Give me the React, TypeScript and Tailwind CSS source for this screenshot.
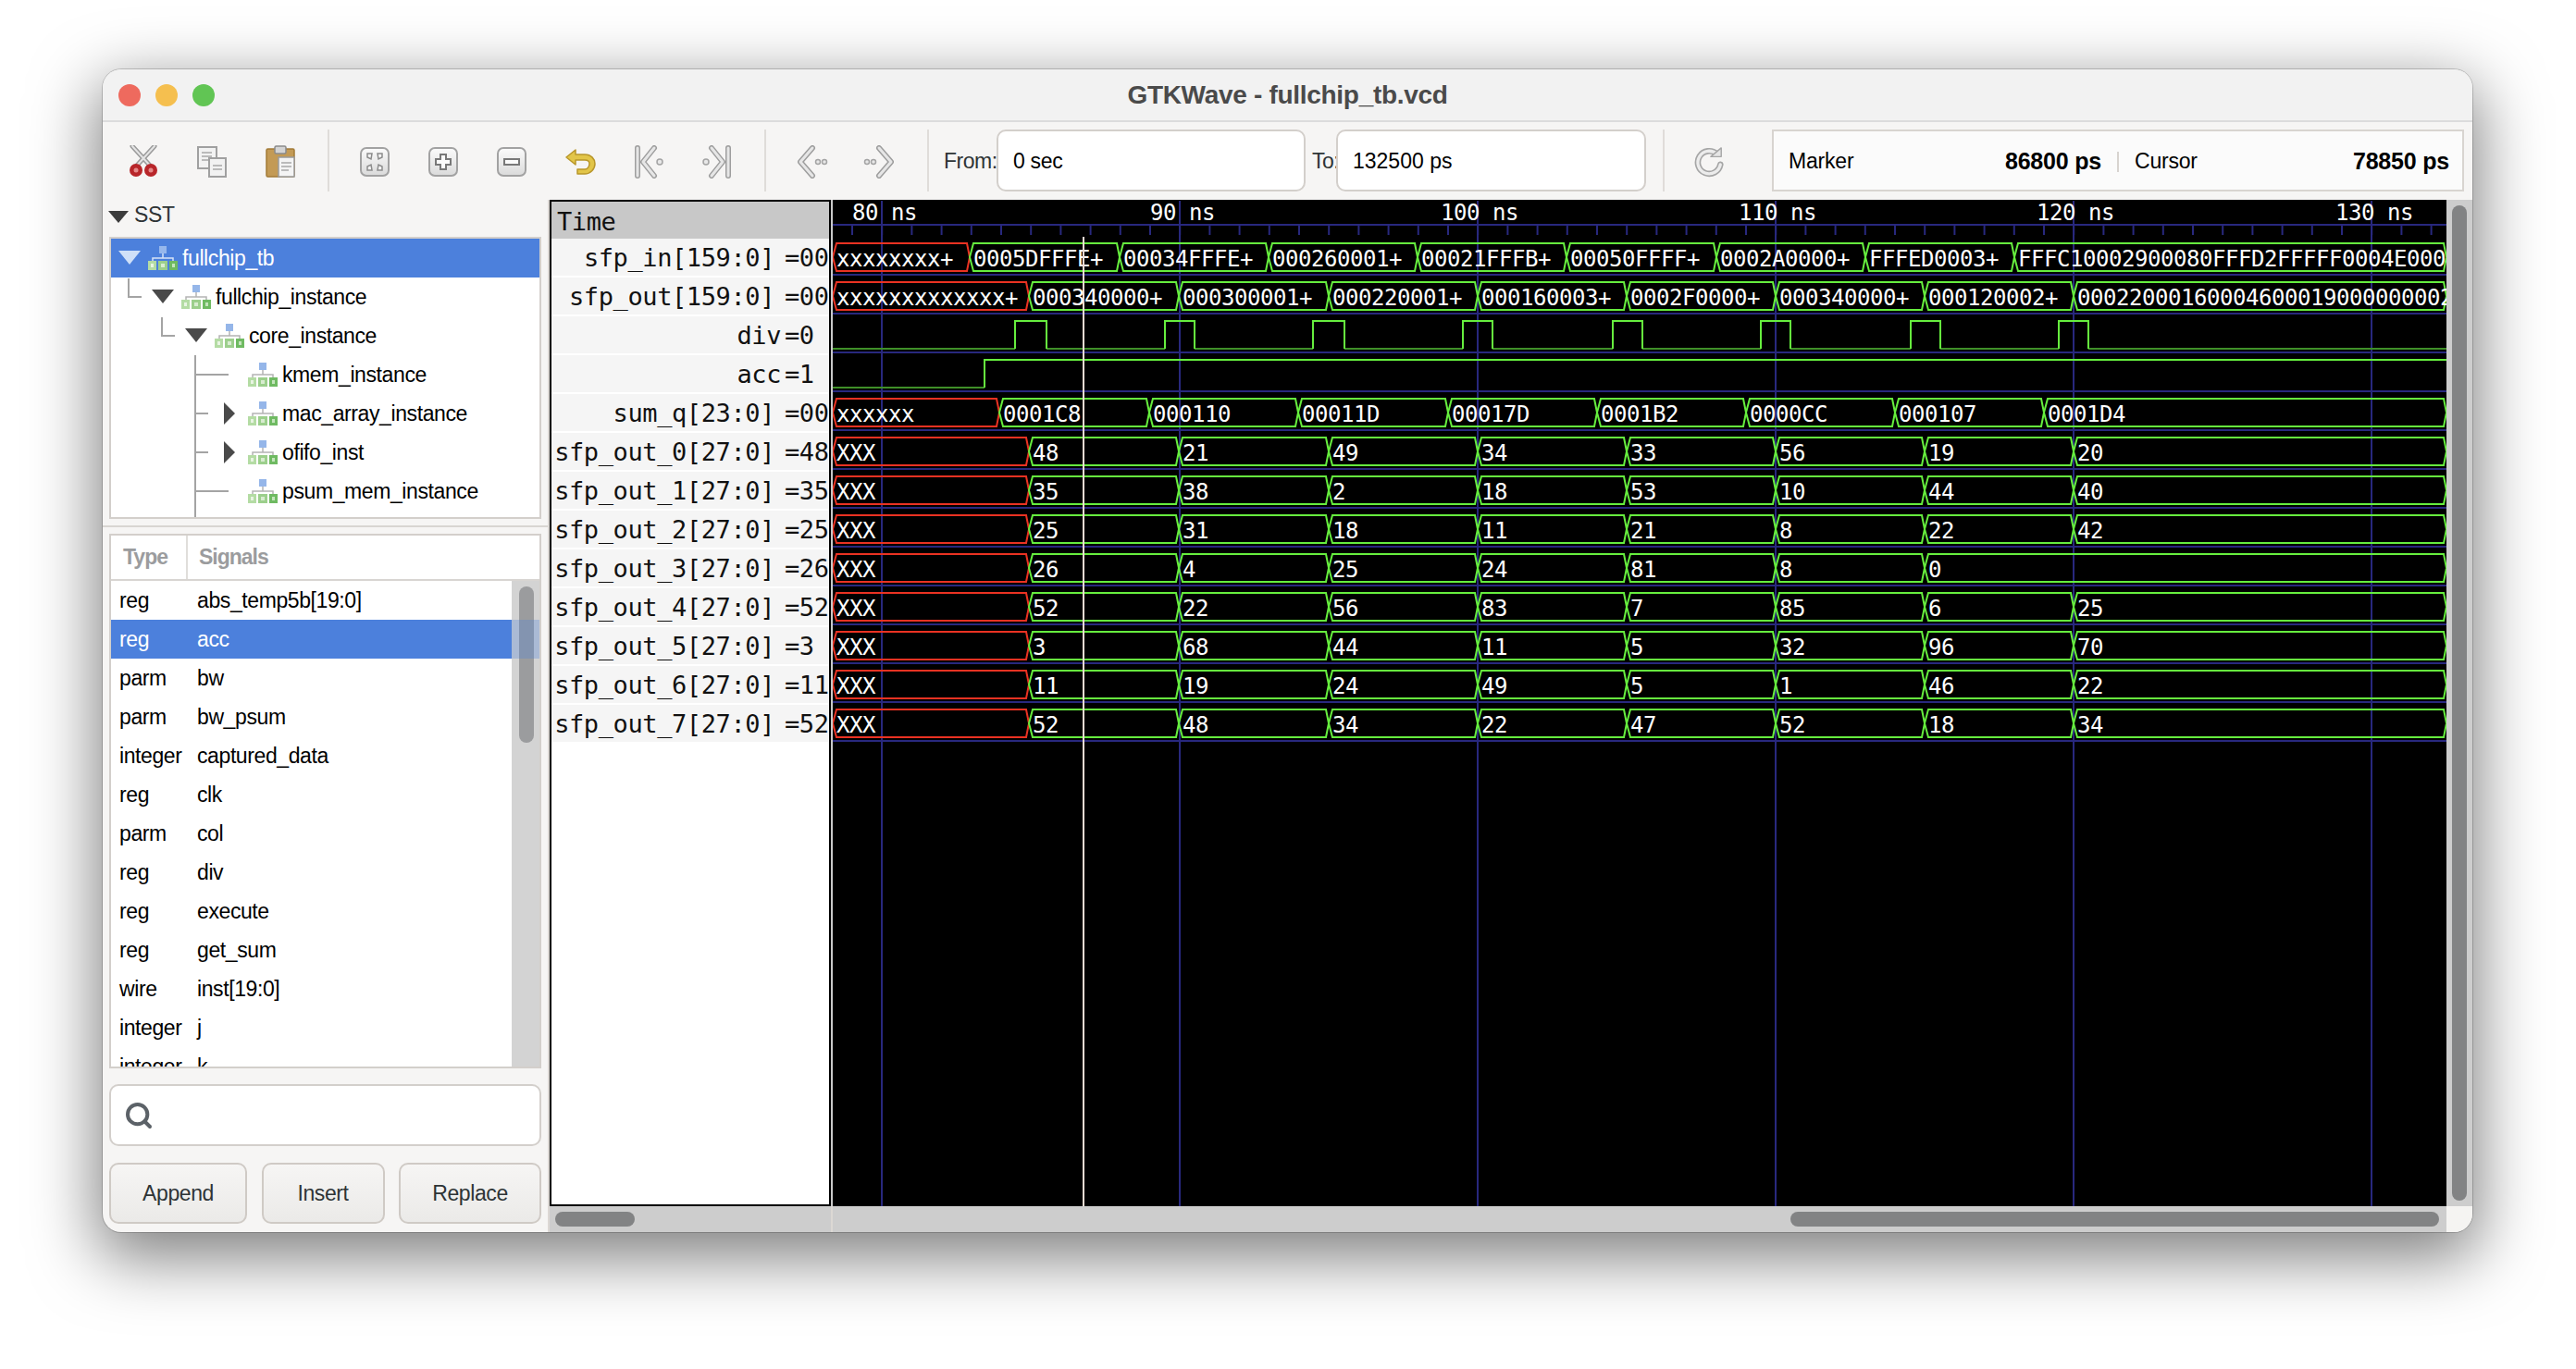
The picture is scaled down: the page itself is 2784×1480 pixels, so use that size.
import React from "react";
import { Search } from "lucide-react";

const SANS = "font-['Liberation_Sans',Arial,sans-serif]";
const NAVY = "#28287e";
const GREEN = "#66ee3e";
const DIM = "#3f8f28";
const RED = "#ea3222";

// crossing positions, measured off the time axis
const IN_X = [900, 1048, 1210, 1371, 1532, 1693, 1855, 2016, 2177, 2644];
const OUT_X = [900, 1112, 1274, 1436, 1597, 1758, 1919, 2080, 2241, 2644];
const SUM_X = [900, 1080, 1242, 1403, 1565, 1726, 1887, 2048, 2209, 2644];
const OUT3_X = [900, 1112, 1274, 1436, 1597, 1758, 1919, 2080, 2644];
const MAJOR = [
  { x: 953, label: "80 ns", at: 921 },
  { x: 1275, label: "90 ns", at: 1243 },
  { x: 1597, label: "100 ns", at: 1557 },
  { x: 1919, label: "110 ns", at: 1879 },
  { x: 2241, label: "120 ns", at: 2201 },
  { x: 2563, label: "130 ns", at: 2524 },
];
const PULSES = [[1097, 1131], [1259, 1291], [1419, 1453], [1581, 1613], [1743, 1775], [1903, 1935], [2065, 2097], [2225, 2257]];

const BUSES: { row: number; xs: number[]; vals: string[] }[] = [
  { row: 0, xs: IN_X, vals: ["xxxxxxxx+", "0005DFFFE+", "00034FFFE+", "000260001+", "00021FFFB+", "00050FFFF+", "0002A0000+", "FFFED0003+", "FFFC10002900080FFFD2FFFFF0004E0004"] },
  { row: 1, xs: OUT_X, vals: ["xxxxxxxxxxxxx+", "000340000+", "000300001+", "000220001+", "000160003+", "0002F0000+", "000340000+", "000120002+", "000220001600046000190000000022"] },
  { row: 4, xs: SUM_X, vals: ["xxxxxx", "0001C8", "000110", "00011D", "00017D", "0001B2", "0000CC", "000107", "0001D4"] },
  { row: 5, xs: OUT_X, vals: ["XXX", "48", "21", "49", "34", "33", "56", "19", "20"] },
  { row: 6, xs: OUT_X, vals: ["XXX", "35", "38", "2", "18", "53", "10", "44", "40"] },
  { row: 7, xs: OUT_X, vals: ["XXX", "25", "31", "18", "11", "21", "8", "22", "42"] },
  { row: 8, xs: OUT3_X, vals: ["XXX", "26", "4", "25", "24", "81", "8", "0"] },
  { row: 9, xs: OUT_X, vals: ["XXX", "52", "22", "56", "83", "7", "85", "6", "25"] },
  { row: 10, xs: OUT_X, vals: ["XXX", "3", "68", "44", "11", "5", "32", "96", "70"] },
  { row: 11, xs: OUT_X, vals: ["XXX", "11", "19", "24", "49", "5", "1", "46", "22"] },
  { row: 12, xs: OUT_X, vals: ["XXX", "52", "48", "34", "22", "47", "52", "18", "34"] },
];

const NAMES = [
  ["sfp_in[159:0]", "=00"], ["sfp_out[159:0]", "=00"], ["div", "=0"], ["acc", "=1"], ["sum_q[23:0]", "=00"],
  ["sfp_out_0[27:0]", "=48"], ["sfp_out_1[27:0]", "=35"], ["sfp_out_2[27:0]", "=25"], ["sfp_out_3[27:0]", "=26"],
  ["sfp_out_4[27:0]", "=52"], ["sfp_out_5[27:0]", "=3"], ["sfp_out_6[27:0]", "=11"], ["sfp_out_7[27:0]", "=52"],
];

const SIGNALS = [
  ["reg", "abs_temp5b[19:0]"], ["reg", "acc"], ["parm", "bw"], ["parm", "bw_psum"], ["integer", "captured_data"],
  ["reg", "clk"], ["parm", "col"], ["reg", "div"], ["reg", "execute"], ["reg", "get_sum"], ["wire", "inst[19:0]"],
  ["integer", "j"], ["integer", "k"],
];

function Waves() {
  const ticks: number[] = [];
  for (let x = 921; x < 2644; x += 32.2) ticks.push(x);
  let div = `M900 377`;
  PULSES.forEach(([a, b]) => { div += `M${a} 377V347H${b}V377`; });
  let low = `M900 377`;
  let prev = 900;
  PULSES.forEach(([a, b]) => { low += `M${prev} 377H${a}`; prev = b; });
  low += `M${prev} 377H2644`;
  return (
    <svg width={1744} height={1088} viewBox="900 216 1744 1088" className="block shrink-0 bg-black font-['DejaVu_Sans_Mono',monospace] text-[24px] tracking-[-0.45px]">
      {MAJOR.map((m) => <line key={m.x} x1={m.x} x2={m.x} y1={217} y2={1304} stroke={NAVY} strokeWidth={2} />)}
      <line x1={900} x2={2644} y1={243} y2={243} stroke={NAVY} strokeWidth={2} />
      {ticks.map((x) => <line key={x} x1={x} x2={x} y1={243} y2={254} stroke={NAVY} strokeWidth={2} />)}
      {NAMES.map((_, r) => <line key={r} x1={900} x2={2644} y1={297 + 42 * r} y2={297 + 42 * r} stroke={NAVY} strokeWidth={2} />)}
      {MAJOR.map((m) => <text key={m.label} x={m.at} y={238} fill="#fff">{m.label}</text>)}

      <path d={low} stroke={DIM} strokeWidth={2} fill="none" />
      <path d={div} stroke={GREEN} strokeWidth={2} fill="none" />
      <path d="M900 419H1064" stroke={DIM} strokeWidth={2} fill="none" />
      <path d="M1064 419V389H2644" stroke={GREEN} strokeWidth={2} fill="none" />

      {BUSES.map((b) => {
        const top = 263 + 42 * b.row;
        const bot = top + 30;
        const mid = top + 15;
        return b.vals.map((v, i) => {
          const a = b.xs[i];
          const e = b.xs[i + 1];
          return (
            <g key={`${b.row}-${i}`}>
              <path d={`M${a} ${mid}L${a + 4} ${top}H${e - 3}L${e} ${mid}L${e - 3} ${bot}H${a + 4}Z`} fill="none" stroke={i === 0 ? RED : GREEN} strokeWidth={2} />
              <text x={a + 4} y={288 + 42 * b.row} fill="#fff">{v}</text>
            </g>
          );
        });
      })}

      <line x1={1171} x2={1171} y1={256} y2={1304} stroke="#f0dcd4" strokeWidth={2} />
    </svg>
  );
}

/* toolbar stock icons */
function Scissors() {
  return (
    <svg width={36} height={36} viewBox="0 0 36 36">
      <path d="M6 1L27 24M30 1L9 24" stroke="#9a9a9a" strokeWidth={5} strokeLinecap="round" />
      <path d="M6 1L27 24M30 1L9 24" stroke="#e4e4e4" strokeWidth={2} strokeLinecap="round" />
      <circle cx={10} cy={27} r={7} fill="#b8262a" />
      <circle cx={26} cy={27} r={7} fill="#b8262a" />
      <circle cx={10} cy={27} r={2.5} fill="#e58a8a" />
      <circle cx={26} cy={27} r={2.5} fill="#e58a8a" />
    </svg>
  );
}
function Copy() {
  return (
    <svg width={36} height={36} viewBox="0 0 36 36">
      <rect x={3} y={2} width={20} height={23} fill="#f2f2f2" stroke="#a0a0a0" strokeWidth={2} />
      <path d="M7 8H18M7 12H18M7 16H14" stroke="#a8a8a8" strokeWidth={1.5} />
      <rect x={15} y={14} width={18} height={20} fill="#f2f2f2" stroke="#a0a0a0" strokeWidth={2} />
      <path d="M19 22H29M19 26H29" stroke="#a8a8a8" strokeWidth={1.5} />
    </svg>
  );
}
function Paste() {
  return (
    <svg width={36} height={36} viewBox="0 0 36 36">
      <rect x={3} y={4} width={30} height={30} rx={1.5} fill="#c39a55" stroke="#a27a36" strokeWidth={1.5} />
      <rect x={12} y={1} width={12} height={8} rx={1.5} fill="#d4d4d4" stroke="#8a8a8a" strokeWidth={1.5} />
      <rect x={16} y={13} width={17} height={21} fill="#f4f4f4" stroke="#9a9a9a" strokeWidth={1.5} />
      <path d="M19 19H30M19 23H30M19 27H27" stroke="#a8a8a8" strokeWidth={1.5} />
    </svg>
  );
}
function ZoomBox({ children }: { children: React.ReactNode }) {
  return (
    <svg width={36} height={36} viewBox="0 0 36 36">
      <defs>
        <linearGradient id="zoomfill" x1="0" y1="0" x2="0" y2="1">
          <stop offset="0" stopColor="#fbfbfb" />
          <stop offset="1" stopColor="#dadada" />
        </linearGradient>
      </defs>
      <rect x={3} y={3} width={30} height={30} rx={6} fill="url(#zoomfill)" stroke="#a2a2a2" strokeWidth={2} />
      {children}
    </svg>
  );
}
function Chevrons({ flip, bar }: { flip?: boolean; bar?: boolean }) {
  const body = bar ? "M6 3V33M24 3L12 18L24 33" : "M19 3L6 18L19 33";
  return (
    <svg width={36} height={36} viewBox="0 0 36 36" className={flip ? "-scale-x-100" : ""}>
      <path d={body} fill="none" stroke="#9e9e9e" strokeWidth={6} strokeLinecap="round" strokeLinejoin="round" />
      <path d={body} fill="none" stroke="#e6e6e6" strokeWidth={3} strokeLinecap="round" strokeLinejoin="round" />
      {bar ? (
        <circle cx={30} cy={18} r={3} fill="#e8e8e8" stroke="#a4a4a4" strokeWidth={1.5} />
      ) : (
        <>
          <circle cx={25} cy={18} r={2.5} fill="#e8e8e8" stroke="#a4a4a4" strokeWidth={1.5} />
          <circle cx={32} cy={18} r={2.5} fill="#e8e8e8" stroke="#a4a4a4" strokeWidth={1.5} />
        </>
      )}
    </svg>
  );
}

function ToolSlot({ children }: { children: React.ReactNode }) {
  return <div className="flex h-[74px] w-[74px] shrink-0 items-center justify-center pt-[2px]">{children}</div>;
}
function ToolSep({ className }: { className: string }) {
  return <div className={`h-[67px] w-[2px] shrink-0 bg-[#dfdcd9] ${className}`} />;
}

function Toolbar() {
  return (
    <div className="flex h-[84px] shrink-0 items-center bg-[#f6f5f4] pb-[1px] pl-[7px] text-[23px] tracking-[-0.5px] text-[#2e3436]">
      <ToolSlot><Scissors /></ToolSlot>
      <ToolSlot><Copy /></ToolSlot>
      <ToolSlot><Paste /></ToolSlot>
      <ToolSep className="ml-[14px] mr-[12px]" />
      <ToolSlot>
        <ZoomBox>
          <path d="M10 9H15L14 15L10 13ZM26 9H21L22 15L26 13ZM10 27H15L14 21L10 23ZM26 27H21L22 21L26 23Z" fill="#f4f4f4" stroke="#8c8c8c" strokeWidth={1.5} />
        </ZoomBox>
      </ToolSlot>
      <ToolSlot>
        <ZoomBox>
          <path d="M15 10H21V15H26V21H21V26H15V21H10V15H15Z" fill="#fafafa" stroke="#787878" strokeWidth={2} />
        </ZoomBox>
      </ToolSlot>
      <ToolSlot>
        <ZoomBox>
          <rect x={10} y={15} width={16} height={6} fill="#fafafa" stroke="#787878" strokeWidth={2} />
        </ZoomBox>
      </ToolSlot>
      <ToolSlot>
        <svg width={36} height={36} viewBox="0 0 36 36">
          <path d="M3 13L13 5V10H23C30 10 34 15 34 20C34 26 29 31 23 31H15V26H23C26 26 28 23 28 20C28 17 26 16 23 16H13V21Z" fill="#e2c548" stroke="#b8962a" strokeWidth={1.5} strokeLinejoin="round" />
        </svg>
      </ToolSlot>
      <ToolSlot><Chevrons bar /></ToolSlot>
      <ToolSlot><Chevrons bar flip /></ToolSlot>
      <ToolSep className="ml-[14px] mr-[12px]" />
      <ToolSlot><Chevrons /></ToolSlot>
      <ToolSlot><Chevrons flip /></ToolSlot>
      <ToolSep className="ml-[14px]" />
      <span className="ml-[16px] w-[57px] shrink-0 pt-[2px]">From:</span>
      <div className="flex h-[67px] w-[334px] shrink-0 items-center rounded-[10px] border-2 border-[#d3cfcb] bg-white pl-[16px] pt-[2px] tracking-[-0.3px] text-black">0 sec</div>
      <span className="ml-[7px] w-[26px] shrink-0 pt-[2px]">To:</span>
      <div className="flex h-[67px] w-[335px] shrink-0 items-center rounded-[10px] border-2 border-[#d3cfcb] bg-white pl-[16px] pt-[2px] tracking-[0px] text-black">132500 ps</div>
      <ToolSep className="ml-[18px]" />
      <div className="flex w-[116px] shrink-0 items-center justify-center pr-[20px] pt-[2px]">
        <svg width={34} height={34} viewBox="0 0 36 36">
          <path d="M27 9A13 13 0 1 0 31 21" fill="none" stroke="#a6a6a6" strokeWidth={7} strokeLinecap="round" />
          <path d="M27 9A13 13 0 1 0 31 21" fill="none" stroke="#ececec" strokeWidth={3.5} strokeLinecap="round" />
          <path d="M20 12H32V2Z" fill="#e6e6e6" stroke="#a6a6a6" strokeWidth={1.5} strokeLinejoin="round" />
        </svg>
      </div>
      <div className="flex h-[67px] w-[748px] shrink-0 items-center border-2 border-[#d8d4d0] bg-[#fbfbfb] pl-[16px] pr-[14px] pt-[2px] tracking-[-0.2px] text-black">
        <div className="flex w-[338px] shrink-0 items-center justify-between">
          <span>Marker</span>
          <span className="text-[25px] font-bold tracking-[-0.2px]">86800 ps</span>
        </div>
        <div className="mx-[17px] h-[22px] w-[2px] shrink-0 bg-[#d8d4d0]" />
        <div className="flex flex-1 items-center justify-between">
          <span>Cursor</span>
          <span className="text-[25px] font-bold tracking-[-0.2px]">78850 ps</span>
        </div>
      </div>
    </div>
  );
}

/* hierarchy tree */
function Hier({ light }: { light?: boolean }) {
  return (
    <svg width={32} height={28} viewBox="0 0 32 28" className="shrink-0">
      <rect x={12} y={1} width={8} height={8} fill={light ? "#a9c4f0" : "#7ba4e4"} opacity={0.8} />
      <path d="M16 9V14M5 17V14H27V17" fill="none" stroke={light ? "#d6e2f6" : "#b4b4b4"} strokeWidth={1.5} />
      <rect x={0} y={17} width={9} height={10} fill="#b4dca4" />
      <rect x={11} y={17} width={10} height={10} fill="#9ccf8c" />
      <rect x={23} y={17} width={9} height={10} fill="#6fba62" />
      <rect x={3} y={20} width={3} height={4} fill="#e8f4e2" />
      <rect x={14} y={20} width={4} height={4} fill="#d8ecd0" />
      <rect x={26} y={20} width={3} height={4} fill="#c4e4bc" />
    </svg>
  );
}

function TreeRow({ lead, name, selected }: { lead: React.ReactNode; name: string; selected?: boolean }) {
  return (
    <div className={`flex h-[42px] shrink-0 items-center ${selected ? "bg-[#4c80dc] text-white" : "text-black"}`}>
      {lead}
      <Hier light={selected} />
      <span className="ml-[5px] whitespace-nowrap text-[23px] tracking-[-0.4px]">{name}</span>
    </div>
  );
}

const DOWN = "#4a4a4a";

function Tree() {
  return (
    <div className="flex h-[305px] shrink-0 flex-col overflow-hidden border-2 border-[#d3cfcb] bg-white">
      <TreeRow selected name="fullchip_tb" lead={
        <svg width={40} height={42} className="shrink-0"><path d="M8 13H32L20 28Z" fill="#cfe0f8" /></svg>
      } />
      <TreeRow name="fullchip_instance" lead={
        <svg width={76} height={42} className="shrink-0">
          <path d="M19 1V21H33" fill="none" stroke="#a4a4a4" strokeWidth={2} />
          <path d="M44 13H68L56 28Z" fill={DOWN} />
        </svg>
      } />
      <TreeRow name="core_instance" lead={
        <svg width={112} height={42} className="shrink-0">
          <path d="M55 1V21H69" fill="none" stroke="#a4a4a4" strokeWidth={2} />
          <path d="M80 13H104L92 28Z" fill={DOWN} />
        </svg>
      } />
      <TreeRow name="kmem_instance" lead={
        <svg width={148} height={42} className="shrink-0"><path d="M91 0V42M91 21H127" fill="none" stroke="#a4a4a4" strokeWidth={2} /></svg>
      } />
      <TreeRow name="mac_array_instance" lead={
        <svg width={148} height={42} className="shrink-0">
          <path d="M91 0V42M91 21H105" fill="none" stroke="#a4a4a4" strokeWidth={2} />
          <path d="M122 9V33L134 21Z" fill={DOWN} />
        </svg>
      } />
      <TreeRow name="ofifo_inst" lead={
        <svg width={148} height={42} className="shrink-0">
          <path d="M91 0V42M91 21H105" fill="none" stroke="#a4a4a4" strokeWidth={2} />
          <path d="M122 9V33L134 21Z" fill={DOWN} />
        </svg>
      } />
      <TreeRow name="psum_mem_instance" lead={
        <svg width={148} height={42} className="shrink-0"><path d="M91 0V42M91 21H127" fill="none" stroke="#a4a4a4" strokeWidth={2} /></svg>
      } />
      <TreeRow name="" lead={
        <svg width={148} height={42} className="shrink-0"><path d="M91 0V42" fill="none" stroke="#a4a4a4" strokeWidth={2} /></svg>
      } />
    </div>
  );
}

function SignalList() {
  return (
    <div className="flex h-[578px] shrink-0 flex-col overflow-hidden border-2 border-[#d3cfcb] bg-white">
      <div className="flex h-[49px] shrink-0 border-b-2 border-[#d8d5d2] text-[23px] font-bold tracking-[-1px] text-[#9b9c9e]">
        <div className="flex w-[83px] shrink-0 items-center border-r-2 border-[#e0dedb] pl-[13px]">Type</div>
        <div className="flex items-center pl-[12px]">Signals</div>
      </div>
      <div className="relative flex min-h-0 flex-1">
        <div className="min-w-0 flex-1 overflow-hidden">
          {SIGNALS.map(([type, name], i) => (
            <div key={name} className={`flex h-[42px] items-center text-[23px] tracking-[-0.4px] ${i === 1 ? "bg-[#4c80dc] text-white" : "text-black"}`}>
              <span className="w-[93px] shrink-0 pl-[9px]">{type}</span>
              <span className="whitespace-nowrap">{name}</span>
            </div>
          ))}
        </div>
        <div className="relative w-[30px] shrink-0 bg-[#d3d3d3] pl-[8px] pt-[6px]">
          <div className="h-[169px] w-[16px] rounded-full bg-[#9b9c9e]" />
          <div className="absolute inset-x-0 top-[42px] h-[42px] bg-[#4c80dc]/30" />
        </div>
      </div>
    </div>
  );
}

function Btn({ className, children }: { className: string; children: React.ReactNode }) {
  return (
    <button className={`flex h-[66px] items-center justify-center rounded-[10px] border-2 border-[#cfcac5] bg-gradient-to-b from-[#f6f5f4] to-[#ebeae8] text-[23px] tracking-[-0.4px] text-[#2e3436] ${className}`}>
      {children}
    </button>
  );
}

export default function App() {
  return (
    <div className={`min-h-[1480px] bg-white pl-[111px] pt-[75px] ${SANS}`}>
      <div className="flex h-[1257px] w-[2561px] flex-col overflow-hidden rounded-[20px] bg-[#f6f5f4] shadow-[0_0_0_1px_rgba(0,0,0,0.18),0_22px_70px_6px_rgba(0,0,0,0.5)]">
        <div className="flex h-[57px] shrink-0 items-center border-b-2 border-[#dcdcdc] bg-[#f2f2f2]">
          <div className="flex w-0 items-center gap-[16px] overflow-visible pl-[17px]">
            <span className="h-[24px] w-[24px] shrink-0 rounded-full bg-[#ee6a5e]" />
            <span className="h-[24px] w-[24px] shrink-0 rounded-full bg-[#f5bf4f]" />
            <span className="h-[24px] w-[24px] shrink-0 rounded-full bg-[#61c554]" />
          </div>
          <div className="flex-1 pr-[17px] pt-[1px] text-center text-[28px] font-bold tracking-[-0.3px] text-[#4a4a4a]">GTKWave - fullchip_tb.vcd</div>
        </div>
        <Toolbar />
        <div className="flex min-h-0 flex-1">
          <div className="flex w-[481px] shrink-0 flex-col">
            <div className="flex h-[40px] shrink-0 items-start pl-[6px] pt-[3px] text-[23px] tracking-[-0.4px] text-[#2e3436]">
              <svg width={22} height={30} className="shrink-0"><path d="M0 9H22L11 22Z" fill="#3c3c3c" /></svg>
              <span className="ml-[6px] leading-[26px]">SST</span>
            </div>
            <div className="mx-[7px] flex flex-col">
              <Tree />
            </div>
            <div className="mb-[7px] mt-[7px] h-[2px] shrink-0 bg-[#d8d5d2]" />
            <div className="mx-[7px] flex flex-col">
              <SignalList />
              <div className="mt-[17px] flex h-[67px] shrink-0 items-center rounded-[10px] border-2 border-[#d3cfcb] bg-white pl-[14px]">
                <Search size={32} strokeWidth={3} className="text-[#5c6268]" />
              </div>
              <div className="mt-[18px] flex shrink-0 justify-between">
                <Btn className="w-[149px]">Append</Btn>
                <Btn className="w-[133px]">Insert</Btn>
                <Btn className="w-[154px]">Replace</Btn>
              </div>
            </div>
          </div>
          <div className="w-[2px] shrink-0 bg-[#dcd8d4]" />
          <div className="flex min-w-0 flex-1 flex-col">
            <div className="flex h-[1088px] shrink-0">
              <div className="h-[1088px] w-[304px] shrink-0 border-2 border-black bg-white font-['DejaVu_Sans_Mono',monospace] text-[27px] tracking-[-0.4px] text-[#111]">
                <div className="flex h-[40px] items-center bg-[#c8c8c8] pl-[6px] pt-[5px]">Time</div>
                {NAMES.map(([n, v]) => {
                  const bus = n.includes("[");
                  return (
                    <div key={n} className="flex h-[42px] items-center overflow-hidden whitespace-nowrap border-b-2 border-white bg-[#f5f5f5] pt-[3px]">
                      <span className={`shrink-0 text-right ${bus ? "w-[241px]" : "w-[248px]"}`}>{n}</span>
                      <span className={bus ? "ml-[11px]" : "ml-[4px]"}>{v}</span>
                    </div>
                  );
                })}
              </div>
              <div className="w-[2px] shrink-0 bg-[#c9c9c9]" />
              <Waves />
              <div className="w-[28px] shrink-0 bg-[#cdcdcd] pl-[6px] pt-[6px]">
                <div className="h-[1076px] w-[16px] rounded-full bg-[#828384]" />
              </div>
            </div>
            <div className="flex h-[28px] shrink-0">
              <div className="w-[304px] shrink-0 bg-[#cdcdcd] pl-[6px] pt-[6px]">
                <div className="h-[16px] w-[86px] rounded-full bg-[#828384]" />
              </div>
              <div className="w-[2px] shrink-0 bg-[#dcd8d4]" />
              <div className="min-w-0 flex-1 bg-[#cdcdcd] pl-[1035px] pt-[6px]">
                <div className="h-[16px] w-[701px] rounded-full bg-[#828384]" />
              </div>
              <div className="w-[28px] shrink-0 bg-[#f5f4f2]" />
            </div>
          </div>
        </div>
      </div>
    </div>
  );
}
